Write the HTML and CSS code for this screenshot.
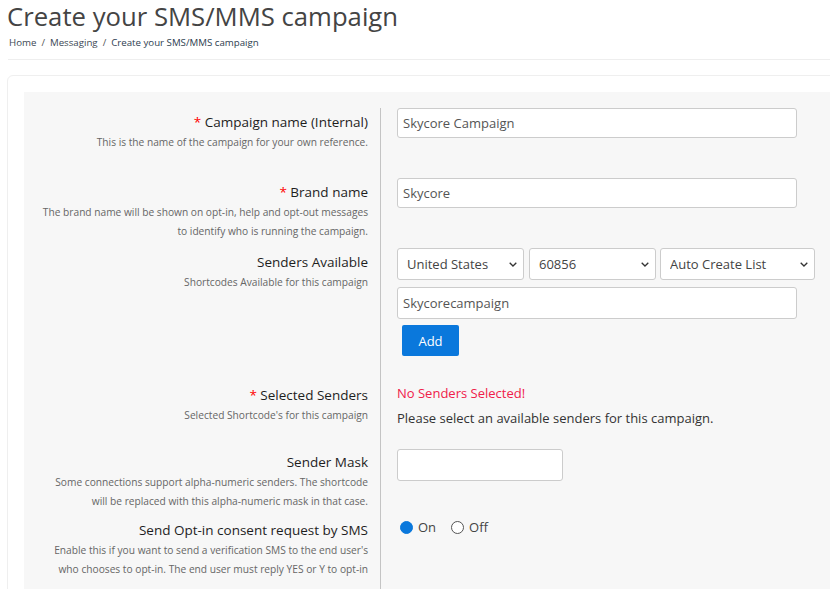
FILE: index.html
```html
<!DOCTYPE html>
<html lang="en">
<head>
  <meta charset="UTF-8">
  <title>Create your SMS/MMS campaign</title>
  <link rel="stylesheet" href="styles.css">
</head>
<body>
  <div class="page">
    <h1 class="page-title">Create your SMS/MMS campaign</h1>
    <ol class="breadcrumb">
      <li><a href="#">Home</a></li>
      <li><a href="#">Messaging</a></li>
      <li class="active">Create your SMS/MMS campaign</li>
    </ol>
    <hr class="divider">

    <div class="card">
      <form class="campaign-form">
        <!-- campaign name -->
        <div class="form-row">
          <div class="form-label">
            <label><span class="req">*</span> Campaign name (Internal)</label>
            <p class="help">This is the name of the campaign for your own reference.</p>
          </div>
          <div class="form-field">
            <input class="input" type="text" value="Skycore Campaign">
          </div>
        </div>

        <!-- brand -->
        <div class="form-row">
          <div class="form-label">
            <label><span class="req">*</span> Brand name</label>
            <p class="help">The brand name will be shown on opt-in, help and opt-out messages to identify who is running the campaign.</p>
          </div>
          <div class="form-field">
            <input class="input" type="text" value="Skycore">
          </div>
        </div>

        <!-- senders available -->
        <div class="form-row form-row--senders">
          <div class="form-label">
            <label>Senders Available</label>
            <p class="help">Shortcodes Available for this campaign</p>
          </div>
          <div class="form-field">
            <div class="select-row">
              <span class="select-wrap select-country">
                <select><option>United States</option></select>
                <svg class="chevron" width="8" height="5" viewBox="0 0 8 5"><path d="M0.7 0.7 L4 4 L7.3 0.7" fill="none" stroke="#333" stroke-width="1.3"/></svg>
              </span>
              <span class="select-wrap select-code">
                <select><option>60856</option></select>
                <svg class="chevron" width="8" height="5" viewBox="0 0 8 5"><path d="M0.7 0.7 L4 4 L7.3 0.7" fill="none" stroke="#333" stroke-width="1.3"/></svg>
              </span>
              <span class="select-wrap select-list">
                <select><option>Auto Create List</option></select>
                <svg class="chevron" width="8" height="5" viewBox="0 0 8 5"><path d="M0.7 0.7 L4 4 L7.3 0.7" fill="none" stroke="#333" stroke-width="1.3"/></svg>
              </span>
            </div>
            <input class="input input--tall" type="text" value="Skycorecampaign">
            <button type="button" class="btn-add">Add</button>
          </div>
        </div>

        <!-- selected senders -->
        <div class="form-row form-row--short">
          <div class="form-label">
            <label><span class="req">*</span> Selected Senders</label>
            <p class="help">Selected Shortcode's for this campaign</p>
          </div>
          <div class="form-field">
            <div class="error-text">No Senders Selected!</div>
            <div class="note-text">Please select an available senders for this campaign.</div>
          </div>
        </div>

        <!-- sender mask -->
        <div class="form-row form-row--mask">
          <div class="form-label">
            <label>Sender Mask</label>
            <p class="help">Some connections support alpha-numeric senders. The shortcode will be replaced with this alpha-numeric mask in that case.</p>
          </div>
          <div class="form-field">
            <input class="input input--tall input--mask" type="text" value="">
          </div>
        </div>

        <!-- opt-in -->
        <div class="form-row form-row--optin">
          <div class="form-label">
            <label>Send Opt-in consent request by SMS</label>
            <p class="help">Enable this if you want to send a verification SMS to the end user's who chooses to opt-in. The end user must reply YES or Y to opt-in</p>
          </div>
          <div class="form-field">
            <div class="radio-group">
              <label class="radio"><input type="radio" name="optin" checked> On</label>
              <label class="radio"><input type="radio" name="optin"> Off</label>
            </div>
          </div>
        </div>
      </form>
    </div>
  </div>
</body>
</html>
```

FILE: styles.css
```css
* {
  box-sizing: border-box;
}

html,
body {
  margin: 0;
  padding: 0;
  overflow: hidden;
  background: #fff;
}

body {
  font-family: "Open Sans", "Noto Sans", sans-serif;
  color: #333;
}

.page {
  width: 880px;
  padding-left: 7px;
}

.page-title {
  margin: 0;
  font-size: 25.7px;
  line-height: 34px;
  font-weight: 400;
  color: #444;
}

.breadcrumb {
  display: flex;
  list-style: none;
  margin: 2px 0 0;
  padding: 0 0 0 2px;
  font-size: 9.7px;
  line-height: 14px;
}

.breadcrumb li + li::before {
  content: "/";
  padding: 0 5px;
  color: #555;
}

.breadcrumb a {
  color: #3c4854;
  text-decoration: none;
}

.breadcrumb .active {
  color: #2d3d4f;
}

.divider {
  margin: 9px 0 0 1px;
  height: 0;
  border: 0;
  border-top: 1px solid #eee;
}

.card {
  margin-top: 15px;
  padding: 16px;
  border: 1px solid #efefef;
  border-radius: 6px;
}

.campaign-form {
  background: #f7f7f7;
  padding-top: 16px;
}

/* form rows */
.form-row {
  display: grid;
  grid-template-columns: 356px 1fr;
  min-height: 70px;
}

.form-row--senders {
  min-height: 133px;
}

.form-row--short {
  min-height: 67px;
}

.form-row--mask {
  min-height: 68px;
}

.form-row--optin {
  min-height: 90px;
}

.form-label {
  padding: 4px 12px 0 15px;
  text-align: right;
}

.form-label label {
  display: block;
  font-size: 13.5px;
  line-height: 21px;
  font-weight: 500;
  color: #1e1e1e;
}

.req {
  color: #f00;
}

.help {
  margin: 0;
  font-size: 10.2px;
  line-height: 19px;
  color: #666;
}

.form-field {
  border-left: 1px solid #c4c4c4;
  padding-left: 16px;
}

/* inputs */
.input {
  display: block;
  width: 400px;
  height: 30px;
  padding: 0 5px;
  border: 1px solid #ccc;
  border-radius: 3px;
  background: #fff;
  font-family: "Open Sans", "Noto Sans", sans-serif;
  font-size: 13px;
  color: #555;
}

.input--tall {
  height: 32px;
}

.input--mask {
  width: 166px;
  margin-top: 1px;
}

.select-row {
  display: flex;
  margin-bottom: 7px;
}

.select-wrap {
  position: relative;
  display: block;
}

.select-wrap + .select-wrap {
  margin-left: 5px;
}

.select-wrap select {
  appearance: none;
  -webkit-appearance: none;
  width: 100%;
  height: 32px;
  padding: 0 20px 0 9px;
  border: 1px solid #ccc;
  border-radius: 3px;
  background: #fff;
  font-family: "Open Sans", "Noto Sans", sans-serif;
  font-size: 13px;
  color: #444;
}

.select-country,
.select-code {
  width: 127px;
}

.select-wrap.select-list {
  width: 155px;
  margin-left: 4px;
}

.chevron {
  position: absolute;
  right: 7px;
  top: 14px;
  pointer-events: none;
}

.btn-add {
  display: block;
  margin: 6px 0 0 5px;
  width: 57px;
  height: 31px;
  border: 0;
  border-radius: 2px;
  background: #0a78dc;
  color: #fff;
  font-family: "Open Sans", "Noto Sans", sans-serif;
  font-size: 13px;
}

.error-text {
  font-size: 13px;
  line-height: 25px;
  color: #f0204a;
}

.note-text {
  font-size: 13px;
  line-height: 25px;
  color: #333;
}

/* radios */
.radio-group {
  display: flex;
  align-items: center;
  height: 22px;
}

.radio {
  display: flex;
  align-items: center;
  margin-right: 12px;
  font-size: 13px;
  color: #444;
}

.radio input {
  appearance: none;
  -webkit-appearance: none;
  width: 13px;
  height: 13px;
  margin: 0 5px 0 3px;
  border: 1px solid #555;
  border-radius: 50%;
  background: #fff;
}

.radio input:checked {
  border-color: #0a78dc;
  background: #0a78dc;
}
```
